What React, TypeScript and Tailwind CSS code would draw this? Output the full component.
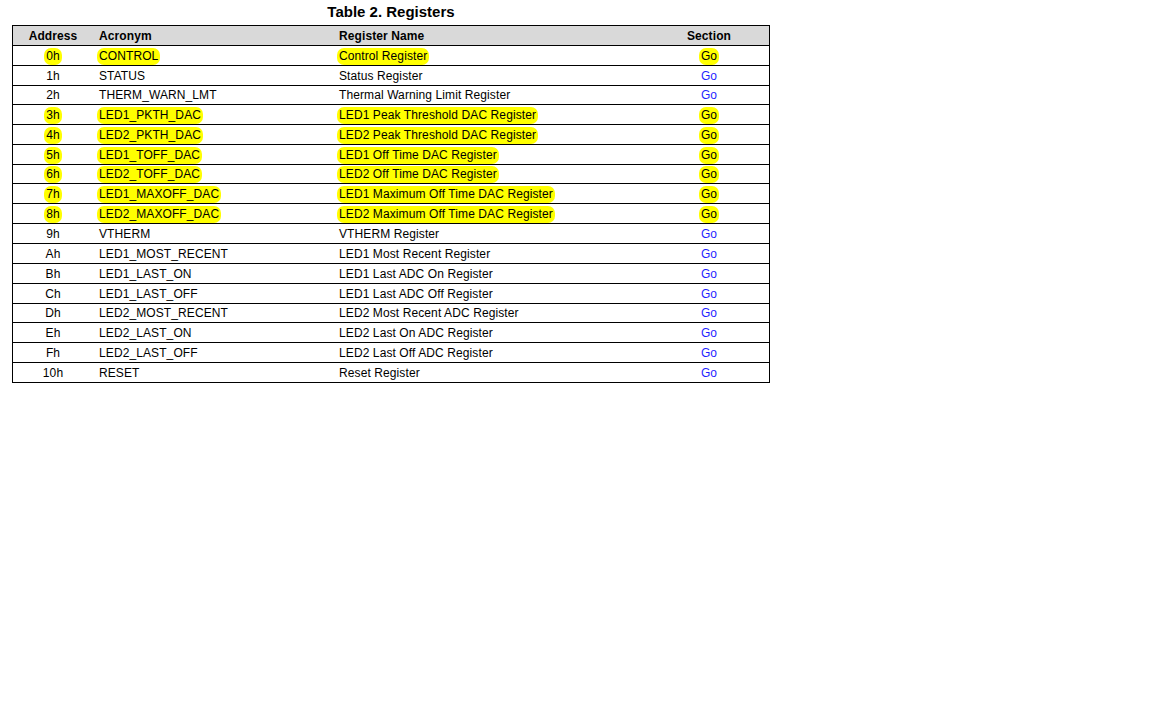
import React from 'react';

type Reg = { addr: string; acronym: string; name: string; mark?: boolean; h: string };

const registers: Reg[] = [
  { addr: '0h', acronym: 'CONTROL', name: 'Control Register', mark: true, h: 'h-[20px]' },
  { addr: '1h', acronym: 'STATUS', name: 'Status Register', h: 'h-[20px]' },
  { addr: '2h', acronym: 'THERM_WARN_LMT', name: 'Thermal Warning Limit Register', h: 'h-[19px]' },
  { addr: '3h', acronym: 'LED1_PKTH_DAC', name: 'LED1 Peak Threshold DAC Register', mark: true, h: 'h-[20px]' },
  { addr: '4h', acronym: 'LED2_PKTH_DAC', name: 'LED2 Peak Threshold DAC Register', mark: true, h: 'h-[20px]' },
  { addr: '5h', acronym: 'LED1_TOFF_DAC', name: 'LED1 Off Time DAC Register', mark: true, h: 'h-[20px]' },
  { addr: '6h', acronym: 'LED2_TOFF_DAC', name: 'LED2 Off Time DAC Register', mark: true, h: 'h-[19px]' },
  { addr: '7h', acronym: 'LED1_MAXOFF_DAC', name: 'LED1 Maximum Off Time DAC Register', mark: true, h: 'h-[20px]' },
  { addr: '8h', acronym: 'LED2_MAXOFF_DAC', name: 'LED2 Maximum Off Time DAC Register', mark: true, h: 'h-[20px]' },
  { addr: '9h', acronym: 'VTHERM', name: 'VTHERM Register', h: 'h-[20px]' },
  { addr: 'Ah', acronym: 'LED1_MOST_RECENT', name: 'LED1 Most Recent Register', h: 'h-[20px]' },
  { addr: 'Bh', acronym: 'LED1_LAST_ON', name: 'LED1 Last ADC On Register', h: 'h-[20px]' },
  { addr: 'Ch', acronym: 'LED1_LAST_OFF', name: 'LED1 Last ADC Off Register', h: 'h-[20px]' },
  { addr: 'Dh', acronym: 'LED2_MOST_RECENT', name: 'LED2 Most Recent ADC Register', h: 'h-[19px]' },
  { addr: 'Eh', acronym: 'LED2_LAST_ON', name: 'LED2 Last On ADC Register', h: 'h-[20px]' },
  { addr: 'Fh', acronym: 'LED2_LAST_OFF', name: 'LED2 Last Off ADC Register', h: 'h-[20px]' },
  { addr: '10h', acronym: 'RESET', name: 'Reset Register', h: 'h-[20px]' },
];

// yellow marker pill around highlighted text
const Mark: React.FC<{ on?: boolean; children: React.ReactNode }> = ({ on, children }) =>
  on ? (
    <span className="inline-block bg-[#ffff00] rounded-[7px] px-[2px] leading-[17px]">{children}</span>
  ) : (
    <span className="inline-block px-[2px] leading-[17px]">{children}</span>
  );

export default function App() {
  return (
    <div className="w-[1152px] h-[720px] bg-white text-black font-['Liberation_Sans',Arial,sans-serif]">
      <div className="w-[758px] ml-[12px] pt-[3px]">
        <h1 className="text-center text-[15px] font-bold leading-[18px] h-[22px]">Table 2. Registers</h1>

        <div className="border border-black text-[12px] tracking-[0.1px]">
          <div className="flex h-[19px] items-center bg-[#d9d9d9] font-bold">
            <div className="w-[80px] text-center">Address</div>
            <div className="w-[240px] pl-[6px]">Acronym</div>
            <div className="w-[316px] pl-[6px]">Register Name</div>
            <div className="w-[120px] text-center">Section</div>
          </div>

          {registers.map((r) => (
            <div key={r.addr} className={`flex items-center border-t border-black ${r.h}`}>
              <div className="w-[80px] text-center">
                <Mark on={r.mark}>{r.addr}</Mark>
              </div>
              <div className="w-[240px] pl-[4px]">
                <Mark on={r.mark}>{r.acronym}</Mark>
              </div>
              <div className="w-[316px] pl-[4px]">
                <Mark on={r.mark}>{r.name}</Mark>
              </div>
              <div className="w-[120px] text-center">
                {r.mark ? (
                  <Mark on>Go</Mark>
                ) : (
                  <span className="text-[#1f1fff] leading-[17px]">Go</span>
                )}
              </div>
            </div>
          ))}
        </div>
      </div>
    </div>
  );
}
